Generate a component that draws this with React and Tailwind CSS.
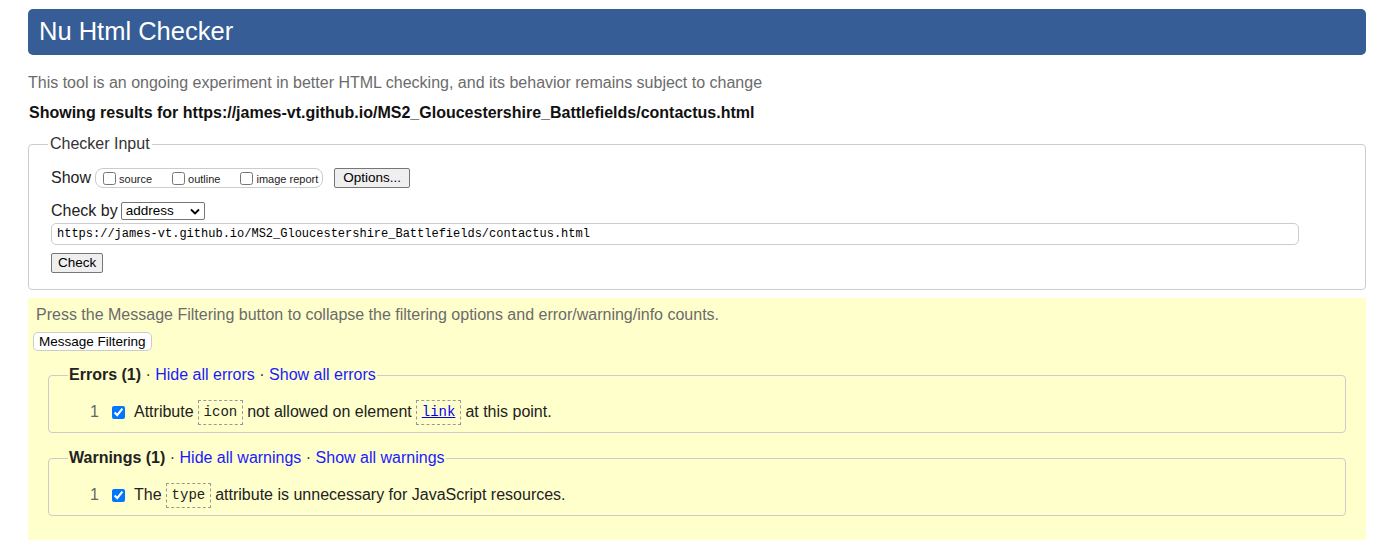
import React from 'react';

const sans = "font-['Liberation_Sans',Arial,sans-serif]";
const mono = "font-['Liberation_Mono','DejaVu_Sans_Mono',monospace]";

function Code({ children, link }) {
  return (
    <span className={`inline-block border border-dashed border-[#999] px-[5px] leading-[23px] text-[14px] ${mono} align-middle`}>
      {link ? <span className="text-[#0000ee] underline">{children}</span> : children}
    </span>
  );
}

function Message({ n, children }) {
  return (
    <div className="flex items-center h-[26px] pl-[22px]">
      <span className="text-[#666] w-[22px]">{n}</span>
      <input type="checkbox" defaultChecked className="w-[13px] h-[13px] m-0 mr-[9px] accent-[#0075ff]" />
      <span className="flex items-center gap-[4px] text-[#222]">{children}</span>
    </div>
  );
}

function Group({ title, kind, children }) {
  return (
    <fieldset className="border border-[#ccc] rounded-[4px] mx-[20px] px-[19px] pt-[12px] pb-[7px]">
      <legend className="px-[1px] text-[16px]">
        <b className="text-[#222]">{title}</b>
        <span className="text-[#333]"> · </span>
        <a className="text-[#1a1aff]">Hide all {kind}</a>
        <span className="text-[#333]"> · </span>
        <a className="text-[#1a1aff]">Show all {kind}</a>
      </legend>
      {children}
    </fieldset>
  );
}

function Opt({ label, last }) {
  return (
    <label className={`flex items-center ${last ? '' : 'mr-[20px]'}`}>
      <input type="checkbox" className="w-[13px] h-[13px] m-0 mr-[3px]" />
      <span className="mt-[3px]">{label}</span>
    </label>
  );
}

export default function App() {
  return (
    <div className={`${sans} bg-white min-h-screen px-[28px] pt-[9px] text-[16px]`}>
      <div className="bg-[#365d95] rounded-[5px] h-[46px] flex items-center px-[11px]">
        <h1 className="text-white text-[25.5px] leading-none">Nu Html Checker</h1>
      </div>

      <p className="text-[#6b6b6b] mt-[19px] leading-[18px]">
        This tool is an ongoing experiment in better HTML checking, and its behavior remains subject to change
      </p>
      <p className="font-bold text-[#111] mt-[12px] leading-[18px] pl-[1px]">
        Showing results for https://james-vt.github.io/MS2_Gloucestershire_Battlefields/contactus.html
      </p>

      <fieldset className="border border-[#ccc] rounded-[4px] mt-[13px] px-[19px] pt-[15px] pb-[15px]">
        <legend className="px-[2px] text-[#333] leading-[18px]">Checker Input</legend>
        <div className="ml-[3px] flex items-center h-[20px]">
          <span className="text-[#222] mr-[4px]">Show</span>
          <span className="flex items-center border border-[#ccc] rounded-[8px] h-[20px] pl-[7px] pr-[4px] text-[11px] text-[#222]">
            <Opt label="source" />
            <Opt label="outline" />
            <Opt label="image report" last />
          </span>
          <button className="ml-[11px] h-[20px] px-[8px] bg-[#efefef] border border-[#767676] rounded-[2px] text-[13.5px] text-black leading-none">
            Options...
          </button>
        </div>

        <div className="ml-[3px] mt-[14px] flex items-center h-[18px]">
          <span className="text-[#222] mr-[3px]">Check by</span>
          <span className="flex items-center justify-between w-[84px] h-[18px] border border-[#767676] rounded-[2px] bg-white pl-[4px] pr-[4px] text-[13.5px] text-black">
            address
            <svg width="10" height="7" viewBox="0 0 10 7" fill="none">
              <path d="M1 1.5l4 4 4-4" stroke="#000" strokeWidth="1.8" />
            </svg>
          </span>
        </div>

        <div className={`ml-[3px] mt-[3px] h-[22px] w-[1248px] border border-[#ccc] rounded-[5px] flex items-center px-[5px] text-[12px] text-black ${mono}`}>
          https://james-vt.github.io/MS2_Gloucestershire_Battlefields/contactus.html
        </div>

        <button className="ml-[3px] mt-[8px] h-[20px] px-[6px] bg-[#efefef] border border-[#767676] rounded-[2px] text-[13.5px] text-black leading-none">
          Check
        </button>
      </fieldset>

      <div className="bg-[#ffffcc] mt-[8px] pt-[8px] pb-[24px] px-[5px]">
        <p className="text-[#6b6b6b] pl-[3px] leading-[18px]">
          Press the Message Filtering button to collapse the filtering options and error/warning/info counts.
        </p>
        <button className="mt-[8px] h-[19px] px-[5px] bg-white border border-[#ccc] rounded-[5px] text-[13.5px] text-black leading-none">
          Message Filtering
        </button>

        <div className="-mx-[5px] mt-[10px] flex flex-col gap-[13px]">
          <Group title="Errors (1)" kind="errors">
            <Message n="1">
              Attribute <Code>icon</Code> not allowed on element <Code link>link</Code> at this point.
            </Message>
          </Group>
          <Group title="Warnings (1)" kind="warnings">
            <Message n="1">
              The <Code>type</Code> attribute is unnecessary for JavaScript resources.
            </Message>
          </Group>
        </div>
      </div>
    </div>
  );
}
